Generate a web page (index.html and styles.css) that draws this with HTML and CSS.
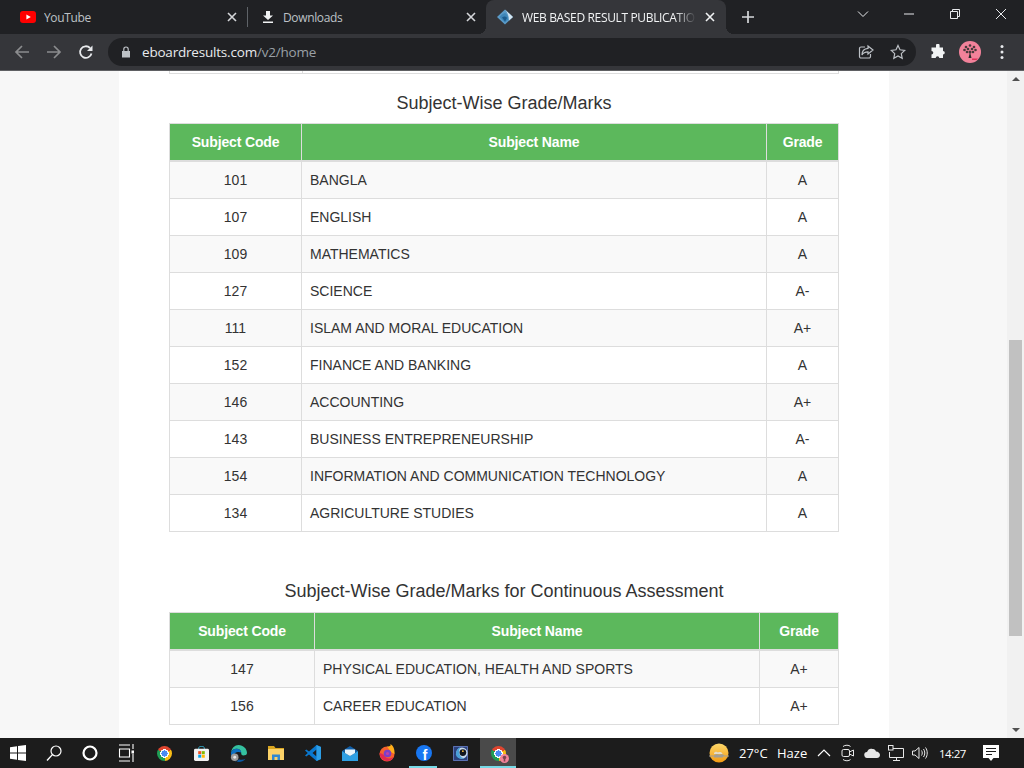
FILE: index.html
```html
<!DOCTYPE html>
<html lang="en">
<head>
  <meta charset="utf-8">
  <title>WEB BASED RESULT PUBLICATION</title>
  <link rel="stylesheet" href="styles.css">
</head>
<body>

<div class="tabstrip">
  <div class="tab tab-yt">
    <svg class="fav" viewBox="0 0 16 16"><rect y="2" width="16" height="12" rx="3" fill="#f00"/><path d="M6.4 5.4 10.8 8l-4.4 2.6z" fill="#fff"/></svg>
    <span class="tab-title">YouTube</span>
    <svg class="tab-x" viewBox="0 0 10 10"><path d="M1 1l8 8M9 1l-8 8"/></svg>
  </div>
  <div class="tab-sep"></div>
  <div class="tab tab-dl">
    <svg class="fav-dl" viewBox="0 0 12 12"><path d="M4 0h4v4.500h3L6 9 1 4.500h3zM1 10.400h10V12H1z" fill="#f1f3f4"/></svg>
    <span class="tab-title">Downloads</span>
    <svg class="tab-x" viewBox="0 0 10 10"><path d="M1 1l8 8M9 1l-8 8"/></svg>
  </div>
  <div class="tab tab-active">
    <svg class="fav" viewBox="0 0 16 16"><path d="M8 .5 16 8l-8 7.500L0 8z" fill="#5b9bc8"/><path d="M8 .5 16 8l-4 3.500C12 7 10.500 3.500 8 .5z" fill="#d3e5f1"/><path d="M8 4C5.500 5 3.500 6.500 2.500 8L8 13.500l3-3C11.500 8 10 5 8 4z" fill="#3f86b8"/><path d="M5 8.500c2-1.500 4-1 5 .5L8 12.500z" fill="#1c5c8e"/></svg>
    <span class="tab-title">WEB BASED RESULT PUBLICATION</span>
    <svg class="tab-x" viewBox="0 0 10 10"><path d="M1 1l8 8M9 1l-8 8"/></svg>
  </div>
  <div class="tab-new">
    <svg viewBox="0 0 14 14"><path d="M7 1v12M1 7h12"/></svg>
  </div>
  <div class="winbtn winbtn-first"><svg viewBox="0 0 12 12"><path d="M1 3.500l5 5 5-5"/></svg></div>
  <div class="winbtn"><svg viewBox="0 0 12 12"><path d="M1 6h10"/></svg></div>
  <div class="winbtn"><svg viewBox="0 0 12 12"><path d="M1.500 3.500h7v7h-7zM3.500 3.500v-2h7v7h-2"/></svg></div>
  <div class="winbtn"><svg viewBox="0 0 12 12"><path d="M1 1l10 10M11 1L1 11"/></svg></div>
</div>

<div class="toolbar">
  <div class="navbtn navbtn-first"><svg viewBox="0 0 16 16" class="dim"><path d="M15 8H2M8 2 2 8l6 6"/></svg></div>
  <div class="navbtn"><svg viewBox="0 0 16 16" class="dim"><path d="M1 8h13M8 2l6 6-6 6"/></svg></div>
  <div class="navbtn"><svg viewBox="0 0 16 16" class="lit"><path d="M13.500 9.500A5.800 5.800 0 1 1 12 4"/><path class="solid" d="M14.500 1.500v5.500H9z"/></svg></div>
  <div class="omnibox">
    <svg class="lock" viewBox="0 0 10 12"><path d="M1 5h8v6.500H1z" fill="#bdc1c6"/><path d="M2.800 5V3.200a2.200 2.200 0 0 1 4.400 0V5" fill="none" stroke="#bdc1c6" stroke-width="1.200"/></svg>
    <span class="url"><span class="url-host">eboardresults.com</span>/v2/home</span>
    <div class="omni-actions">
      <div class="navbtn"><svg viewBox="0 0 16 16" class="soft"><path d="M7 3H3a1.500 1.500 0 0 0-1.500 1.500v8A1.500 1.500 0 0 0 3 14h8a1.500 1.500 0 0 0 1.500-1.500V10"/><path d="M10 2l5 4-5 4V7.800c-3 0-5 1-6 3.200 0-3.800 2-6.300 6-6.600z"/></svg></div>
      <div class="navbtn"><svg viewBox="0 0 16 16" class="soft"><path d="M8 1.500l2 4.300 4.700.6-3.400 3.200.9 4.700L8 12l-4.200 2.300.9-4.700L1.300 6.400 6 5.800z"/></svg></div>
    </div>
  </div>
  <div class="navbtn navbtn-ext"><svg viewBox="0 0 16 16"><path d="M6 1.500a1.800 1.800 0 0 1 3.600 0V3.500H13v3.400a1.800 1.800 0 0 1 0 3.600v3.500H9.300a1.800 1.800 0 0 0-3.600 0H1.500V10.500a1.800 1.800 0 0 0 0-3.600V3.500H6z" fill="#f1f3f4"/></svg></div>
  <div class="navbtn">
    <svg class="avatar" viewBox="0 0 22 22">
      <circle cx="11" cy="11" r="11" fill="#f2829a"/>
      <path d="M11 11 9.500 17h3z" fill="#2b2b2b"/>
      <g fill="#4a3a3c"><circle cx="7" cy="6" r="1.300"/><circle cx="11" cy="4.500" r="1.300"/><circle cx="15" cy="6" r="1.300"/><circle cx="5.500" cy="9" r="1.300"/><circle cx="9" cy="8" r="1.300"/><circle cx="13" cy="8" r="1.300"/><circle cx="16.500" cy="9" r="1.300"/><circle cx="8" cy="11" r="1.300"/><circle cx="14" cy="11" r="1.300"/><circle cx="11" cy="11" r="1.500"/></g>
      <path d="M13 17.500h6l-1.500 1.500H13z" fill="#e0305a"/>
    </svg>
  </div>
  <div class="navbtn"><svg class="dots" viewBox="0 0 4 16"><circle cx="2" cy="2.500" r="1.500"/><circle cx="2" cy="8" r="1.500"/><circle cx="2" cy="13.500" r="1.500"/></svg></div>
</div>

<div class="viewport">
  <div class="page">
    <div class="card">
      <div class="stub"><div class="stub-a"></div><div class="stub-b"></div></div>

      <h4 class="sec-title sec-first">Subject-Wise Grade/Marks</h4>
      <table class="marks marks-main">
        <colgroup><col class="c1"><col class="c2"><col class="c3"></colgroup>
        <thead><tr><th>Subject Code</th><th>Subject Name</th><th>Grade</th></tr></thead>
        <tbody>
          <tr><td>101</td><td>BANGLA</td><td>A</td></tr>
          <tr><td>107</td><td>ENGLISH</td><td>A</td></tr>
          <tr><td>109</td><td>MATHEMATICS</td><td>A</td></tr>
          <tr><td>127</td><td>SCIENCE</td><td>A-</td></tr>
          <tr><td>111</td><td>ISLAM AND MORAL EDUCATION</td><td>A+</td></tr>
          <tr><td>152</td><td>FINANCE AND BANKING</td><td>A</td></tr>
          <tr><td>146</td><td>ACCOUNTING</td><td>A+</td></tr>
          <tr><td>143</td><td>BUSINESS ENTREPRENEURSHIP</td><td>A-</td></tr>
          <tr><td>154</td><td>INFORMATION AND COMMUNICATION TECHNOLOGY</td><td>A</td></tr>
          <tr><td>134</td><td>AGRICULTURE STUDIES</td><td>A</td></tr>
        </tbody>
      </table>

      <h4 class="sec-title sec-second">Subject-Wise Grade/Marks for Continuous Assessment</h4>
      <table class="marks marks-ca">
        <colgroup><col class="c1"><col class="c2"><col class="c3"></colgroup>
        <thead><tr><th>Subject Code</th><th>Subject Name</th><th>Grade</th></tr></thead>
        <tbody>
          <tr><td>147</td><td>PHYSICAL EDUCATION, HEALTH AND SPORTS</td><td>A+</td></tr>
          <tr><td>156</td><td>CAREER EDUCATION</td><td>A+</td></tr>
        </tbody>
      </table>
    </div>
  </div>
  <div class="scrollbar">
    <div class="arrow-up"></div>
    <div class="thumb"></div>
    <div class="arrow-down"></div>
  </div>
</div>

<div class="taskbar">
  <div class="tb tb-sys"><svg viewBox="0 0 16 16" width="16" height="16"><path d="M0 2.200 7 1.200V7.500H0zM8 1 16 0V7.500H8zM0 8.500H7V14.800L0 13.800zM8 8.500H16V16L8 15z" fill="#fff"/></svg></div>
  <div class="tb tb-sys"><svg viewBox="0 0 16 16" width="16" height="16"><circle cx="10" cy="6" r="5" fill="none" stroke="#fff" stroke-width="1.200"/><path d="M6.400 9.600 1 15.500" stroke="#fff" stroke-width="1.400" fill="none"/></svg></div>
  <div class="tb tb-sys"><svg viewBox="0 0 16 16" width="16" height="16"><circle cx="8" cy="8" r="6.500" fill="none" stroke="#fff" stroke-width="2.200"/></svg></div>
  <div class="tb tb-sys"><svg viewBox="0 0 16 18" width="16" height="18"><path d="M1 1h11M1 17h11M1.500 5h10v8h-10z" fill="none" stroke="#fff" stroke-width="1.100"/><path d="M15 0v5M15 10v8" stroke="#fff" stroke-width="1.100"/><rect x="13.500" y="6.500" width="3" height="3" fill="#fff"/></svg></div>

  <div class="tb tb-app tb-app-first"><div class="chrome"></div></div>
  <div class="tb tb-app"><svg viewBox="0 0 16 16" width="15" height="15"><path d="M5 4V2.200C5 1 6 .5 8 .5s3 .5 3 1.700V4" fill="none" stroke="#35b5d8" stroke-width="1"/><rect y="3" width="16" height="13" rx="1.500" fill="#f2f2f2"/><rect x="4.500" y="5.500" width="3.200" height="3.200" fill="#f25022"/><rect x="8.300" y="5.500" width="3.200" height="3.200" fill="#7fba00"/><rect x="4.500" y="9.300" width="3.200" height="3.200" fill="#00a4ef"/><rect x="8.300" y="9.300" width="3.200" height="3.200" fill="#ffb900"/></svg></div>
  <div class="tb tb-app"><svg viewBox="0 0 18 18" width="17" height="17"><path d="M1 8C2 3 5 0 9 0c5 0 9 4 9 8.500 0 2-2 2.500-4 2.500-1 0-2-.5-2-1.500C12 6 10 4 7 4 4 4 2 5.500 1 8z" fill="#35c1a0"/><path d="M1 8c1-2.500 3-4 6-4 3 0 5 2 5 4-2-1-5-1-7 1-1.500 2-1 6 2 8.500C3.500 17 1 13 1 8z" fill="#0c6fc0"/><path d="M7 17.500c3 1 7 0 9.500-3-2 1-5 1.500-7 .5z" fill="#0c59a4"/><circle cx="5" cy="13" r="4" fill="#9a9a9a"/><circle cx="5" cy="13" r="1.500" fill="#e6e6e6"/></svg></div>
  <div class="tb tb-app"><svg viewBox="0 0 16 16" width="16" height="16"><path d="M0 1h6l1.500 2H16v2H0z" fill="#d9a520"/><rect y="4" width="16" height="11" fill="#fbd268"/><path d="M4 15V9.500h8V15h-2.500V12h-3v3z" fill="#2f88d0"/></svg></div>
  <div class="tb tb-app"><svg viewBox="0 0 16 16" width="16" height="16"><path d="M11.500 0 16 2v12l-4.500 2L4 9.500l-2.700 2L0 10.600 2.800 8 0 5.400l1.300-.9L4 6.500zM11.500 4.500 7.500 8l4 3.500z" fill="#0a78cf"/><path d="M11.500 0 16 2v12l-4.500 2V11.500V4.500z" fill="#2c9ee6"/></svg></div>
  <div class="tb tb-app"><svg viewBox="0 0 16 16" width="16" height="16"><path d="M0 6 8 1l8 5-8 5z" fill="#0f5ea8"/><path d="M0 6l8 5 8-5v10H0z" fill="#2ea0e4"/><path d="M3 4.500h10V8L8 11 3 8z" fill="#e9f5fb"/></svg></div>
  <div class="tb tb-app"><svg viewBox="0 0 16 18" width="16" height="18"><circle cx="8" cy="10" r="7.500" fill="#f6602d"/><path d="M8 2.500C10 3 13 1.500 11 0c3 1 5 5 4.500 10L12 8z" fill="#ffae1a"/><path d="M.6 9c0 4 3 8 7.400 8 3 0 5-1 6.500-4-3 2-7 2-9-1C4 9.500 2 9.500.6 9z" fill="#e22850"/><circle cx="8.500" cy="9.500" r="3.800" fill="#7a3fc8"/><circle cx="8.500" cy="9.500" r="1.600" fill="#c13fa8"/></svg></div>
  <div class="tb tb-app tb-running"><svg viewBox="0 0 16 16" width="16" height="16"><circle cx="8" cy="8" r="8" fill="#1877f2"/><text class="fb-f" x="8.800" y="14.800" text-anchor="middle">f</text></svg></div>
  <div class="tb tb-app"><svg viewBox="0 0 16 16" width="15" height="15"><rect width="16" height="16" fill="#2a3f7a"/><rect x=".7" y=".7" width="14.600" height="14.600" fill="none" stroke="#6f86c9" stroke-width=".8"/><circle cx="9.500" cy="7.500" r="6" fill="#c6d8ea"/><circle cx="10.500" cy="7" r="3.600" fill="#11161f"/><path d="M3 9c0-4 2-7 5-8-2 3-2 7 0 10 1 1.500 3 2 4 2-3 1.500-8 .5-9-4z" fill="#4aa0d8"/><circle cx="10.500" cy="5.500" r="1" fill="#f0b840"/></svg></div>
  <div class="tb tb-app tb-current">
    <div class="chrome"><svg class="chrome-badge" viewBox="0 0 9 9"><circle cx="4.500" cy="4.500" r="4.500" fill="#f2829a"/><circle cx="4.500" cy="3.500" r="1.800" fill="#7a4450"/><path d="M3.700 5h1.600v2.500H3.700z" fill="#7a4450"/></svg></div>
  </div>

  <div class="tray">
    <svg class="weather" viewBox="0 0 20 20" width="20" height="20">
      <defs><linearGradient id="sun" x1="0" y1="0" x2="0" y2="1"><stop offset="0" stop-color="#fdd86a"/><stop offset="1" stop-color="#f39a12"/></linearGradient></defs>
      <circle cx="10" cy="10" r="9.500" fill="url(#sun)"/>
      <path d="M5 10c1-1.500 3-1.500 4-.5 1.500-1 4-.5 4.500 1.500H5z" fill="#e4dccb"/>
      <path d="M0 12.500h5c1-1 3-1.500 5-.8 2-1 4.500-.5 5.500.8H20v1h-6v1H5v-1H0z" fill="#a39e94"/>
    </svg>
    <span class="temp">27°C</span>
    <span class="cond">Haze</span>
    <div class="ti ti-first"><svg viewBox="0 0 14 8" width="14" height="8"><path d="M1 7l6-6 6 6" fill="none" stroke="#fff" stroke-width="1.200"/></svg></div>
    <div class="ti"><svg viewBox="0 0 14 18" width="14" height="18" fill="none" stroke="#e8e8e8" stroke-width="1"><path d="M2 2.500C4 .8 8 .8 9.500 2.500M2 15.500c2 1.700 6 1.700 7.500 0"/><rect x="1" y="5.500" width="7.500" height="7" rx="1.500"/><path d="M8.500 8l4-2v6l-4-2"/></svg></div>
    <div class="ti"><svg viewBox="0 0 16 10" width="16" height="10"><path d="M3.500 10a3 3 0 0 1-.5-6C4 1 6.500 0 8.500 1c1.500-.3 3 .5 3.500 2.500 2.500 0 4 2 4 3.500 0 1.700-1.500 3-3 3z" fill="#e6e6e6"/></svg></div>
    <div class="ti"><svg viewBox="0 0 16 16" width="16" height="16" fill="none" stroke="#e8e8e8" stroke-width="1"><path d="M4 3.500h11.500v9H1.500V7"/><path d="M8.500 12.500v3M5 15.500h7"/><rect x=".5" y=".5" width="4.500" height="4.500" fill="#1c1c1c"/></svg></div>
    <div class="ti"><svg viewBox="0 0 16 14" width="16" height="14" fill="none" stroke="#e8e8e8" stroke-width="1"><path d="M.5 5h2.500L7 1.500v11L3 9H.5z"/><path d="M9.500 4.500c1 1.500 1 3.500 0 5M11.500 3c1.700 2.300 1.700 5.700 0 8M13.500 1.500c2.300 3 2.300 8 0 11"/></svg></div>
    <span class="clock">14:27</span>
    <div class="notif"><svg viewBox="0 0 16 17" width="16" height="17"><path d="M0 0h16v13h-5.500L8 16l-2.500-3H0z" fill="#fff"/><path d="M3 3.500h10M3 6.500h10M3 9.500h6" stroke="#1c1c1c" stroke-width="1"/></svg></div>
  </div>
</div>

</body>
</html>
```

FILE: styles.css
```css
* { box-sizing: border-box; }

html, body { height: 100%; }

body {
	margin: 0;
	height: 768px;
	overflow: hidden;
	display: flex;
	flex-direction: column;
	font-family: "Open Sans", "Noto Sans", sans-serif;
	color: #333;
	background: #f7f7f7;
}

/* tabs */
.tabstrip {
	height: 34px;
	flex: none;
	display: flex;
	background: #202124;
}
.tab {
	height: 34px;
	display: flex;
	align-items: center;
	font-size: 12px;
	letter-spacing: -0.35px;
	color: #bdc1c6;
	padding-right: 10px;
}
.tab-yt { width: 247px; padding-left: 20px; gap: 8px; }
.tab-dl { width: 238px; padding-left: 14px; gap: 9px; }
.tab-active {
	position: relative;
	width: 240px;
	padding-left: 11px;
	padding-right: 11px;
	gap: 9px;
	color: #f1f3f4;
	background: #35363a;
	border-radius: 8px 8px 0 0;
}
.tab-active::before,
.tab-active::after {
	content: "";
	position: absolute;
	bottom: 0;
	width: 8px;
	height: 8px;
}
.tab-active::before {
	left: -8px;
	background: radial-gradient(circle at 0 0, transparent 8px, #35363a 8px);
}
.tab-active::after {
	right: -8px;
	background: radial-gradient(circle at 100% 0, transparent 8px, #35363a 8px);
}
.tab-title {
	flex: 1;
	overflow: hidden;
	white-space: nowrap;
}
.tab-active .tab-title {
	font-weight: 500;
	-webkit-mask-image: linear-gradient(to right, #000 88%, transparent 100%);
	mask-image: linear-gradient(to right, #000 88%, transparent 100%);
}
.fav { width: 16px; height: 16px; flex: none; }
.fav-dl { width: 12px; height: 12px; flex: none; }
.tab-x { width: 10px; height: 10px; flex: none; }
.tab-x path { fill: none; stroke: #d5d7da; stroke-width: 1.6; }
.tab-active .tab-x path { stroke: #f1f3f4; }
.tab-sep {
	width: 1px;
	height: 20px;
	margin-top: 7px;
	background: #5f6368;
}
.tab-new {
	width: 32px;
	height: 34px;
	margin-left: 6px;
	display: flex;
	align-items: center;
	justify-content: center;
}
.tab-new svg { width: 14px; height: 14px; }
.tab-new path { fill: none; stroke: #d5d7da; stroke-width: 1.7; }
.winbtn {
	width: 46px;
	height: 28px;
	display: flex;
	align-items: center;
	justify-content: center;
}
.winbtn-first { margin-left: auto; }
.winbtn svg { width: 12px; height: 12px; }
.winbtn path { fill: none; stroke: #e8eaed; stroke-width: 1; }

/* address bar */
.toolbar {
	height: 37px;
	flex: none;
	display: flex;
	align-items: flex-start;
	padding-top: 4px;
	background: #35363a;
	border-bottom: 1px solid #5f6063;
}
.navbtn {
	width: 32px;
	height: 28px;
	flex: none;
	display: flex;
	align-items: center;
	justify-content: center;
}
.navbtn-first { margin-left: 6px; }
.navbtn-ext { margin-left: 6px; }
.navbtn svg { width: 16px; height: 16px; }
.navbtn .dim path { fill: none; stroke: #8b8c8e; stroke-width: 1.7; }
.navbtn .lit path { fill: none; stroke: #e8eaed; stroke-width: 1.8; }
.navbtn .lit .solid { fill: #e8eaed; stroke: none; }
.navbtn .soft path { fill: none; stroke: #bdc1c6; stroke-width: 1.2; }
.navbtn .avatar { width: 22px; height: 22px; }
.navbtn .dots { width: 4px; height: 16px; fill: #e8eaed; }
.omnibox {
	width: 808px;
	height: 28px;
	margin-left: 6px;
	flex: none;
	display: flex;
	align-items: center;
	padding-left: 13px;
	padding-right: 2px;
	border-radius: 14px;
	background: #202124;
}
.lock { width: 10px; height: 12px; flex: none; }
.url {
	margin-left: 11px;
	padding-bottom: 1px;
	font-size: 13.5px;
	letter-spacing: -0.2px;
	color: #9aa0a6;
}
.url-host { color: #e8eaed; }
.omni-actions { margin-left: auto; display: flex; }

/* page */
.viewport {
	flex: 1;
	min-height: 0;
	display: flex;
}
.page {
	flex: 1;
	overflow: hidden;
	padding-left: 119px;
	font-family: "Liberation Sans", Arial, sans-serif;
	font-size: 14px;
	line-height: 20px;
}
.card {
	width: 770px;
	height: 100%;
	padding: 0 50px;
	background: #fff;
}
.stub {
	height: 3px;
	display: flex;
	border: 1px solid #ddd;
	border-top: 0;
}
.stub-a { width: 133px; border-right: 1px solid #ddd; }
.sec-title {
	margin: 0 0 10px;
	font-size: 18px;
	font-weight: 500;
	line-height: 20px;
	text-align: center;
}
.sec-first { margin-top: 19px; }
.sec-second { margin-top: 49px; margin-bottom: 11px; }
.marks {
	width: 670px;
	border-collapse: collapse;
	table-layout: fixed;
}
.marks-main .c1 { width: 132px; }
.marks-main .c3 { width: 72px; }
.marks-ca .c1 { width: 145px; }
.marks-ca .c3 { width: 79px; }
.marks th,
.marks td {
	padding: 8px;
	border: 1px solid #ddd;
	text-align: center;
}
.marks th {
	color: #fff;
	font-weight: bold;
	letter-spacing: -0.15px;
	background: #5cb85c;
	border-bottom-width: 2px;
}
.marks td:nth-child(2) { text-align: left; }
.marks tbody tr:nth-child(odd) td { background: #f9f9f9; }

/* fake scrollbar */
.scrollbar {
	width: 17px;
	flex: none;
	display: flex;
	flex-direction: column;
	align-items: center;
	background: #f1f1f1;
}
.arrow-up,
.arrow-down {
	width: 0;
	height: 0;
	border-left: 4px solid transparent;
	border-right: 4px solid transparent;
}
.arrow-up {
	margin-top: 6px;
	border-bottom: 4px solid #505050;
}
.arrow-down {
	margin-top: auto;
	margin-bottom: 6px;
	border-top: 4px solid #505050;
}
.thumb {
	width: 13px;
	height: 296px;
	margin-top: 259px;
	background: #c1c1c1;
}

/* windows taskbar */
.taskbar {
	height: 30px;
	flex: none;
	display: flex;
	background: #1c1c1c;
	color: #fff;
}
.tb {
	height: 30px;
	flex: none;
	display: flex;
	align-items: center;
	justify-content: center;
}
.tb-sys { width: 36px; }
.tb-app { width: 37px; }
.tb-app-first { margin-left: 2px; }
.tb-running,
.tb-current { position: relative; }
.tb-running::after,
.tb-current::after {
	content: "";
	position: absolute;
	bottom: 0;
	left: 4px;
	right: 5px;
	height: 2px;
	background: #76d9e6;
}
.tb-current { background: #4a4a4a; width: 36px; margin-left: 1px; }
.tb-current::after { left: 0; right: 0; }
.chrome {
	position: relative;
	width: 15px;
	height: 15px;
	border-radius: 50%;
	background:
		radial-gradient(circle, #4a8af4 3px, #fff 3.2px 4.2px, transparent 4.4px),
		conic-gradient(from -60deg, #e0452f 0 120deg, #f9bd16 0 240deg, #1f9d55 0);
}
.chrome-badge {
	position: absolute;
	right: -3px;
	bottom: -2px;
	width: 9px;
	height: 9px;
}
.fb-f {
	font-family: "Liberation Sans", Arial, sans-serif;
	font-size: 14.5px;
	font-weight: bold;
	fill: #fff;
}
.tray {
	margin-left: auto;
	display: flex;
	align-items: center;
	font-size: 13px;
}
.weather { flex: none; margin-left: 1px; margin-right: 10px; }
.temp { width: 29px; white-space: nowrap; }
.cond { width: 30px; margin-left: 9px; white-space: nowrap; }
.ti {
	width: 24px;
	height: 30px;
	flex: none;
	display: flex;
	align-items: center;
	justify-content: center;
}
.ti-first { margin-left: 5px; }
.clock {
	width: 26px;
	margin-left: 7px;
	font-size: 11.5px;
	letter-spacing: -0.5px;
	white-space: nowrap;
}
.notif {
	width: 30px;
	height: 30px;
	margin-left: 11px;
	margin-right: 18px;
	display: flex;
	align-items: center;
	justify-content: center;
}
```
